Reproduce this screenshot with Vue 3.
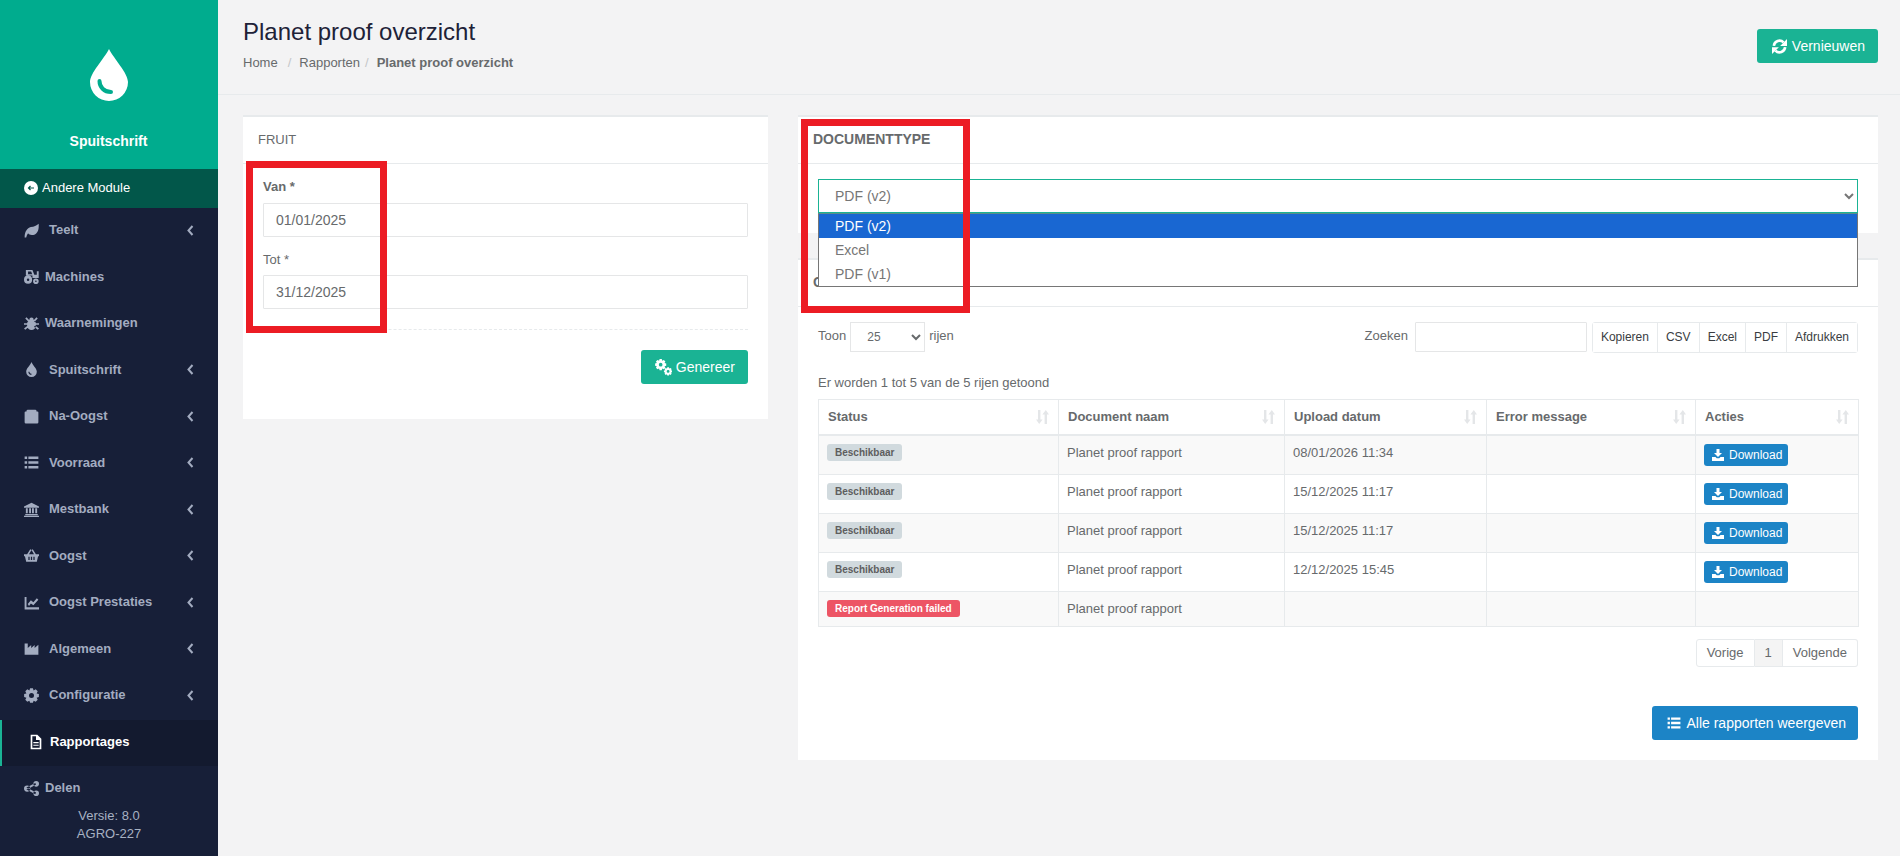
<script setup>
// teeth around a circle, with a hole in the middle
function gear(cx, cy, r, teeth, hole) {
  const pts = []
  const step = (Math.PI * 2) / teeth
  for (let i = 0; i < teeth; i++) {
    const a = i * step
    const corners = [
      [r * 0.74, a - step * 0.5],
      [r, a - step * 0.24],
      [r, a + step * 0.24],
      [r * 0.74, a + step * 0.5]
    ]
    corners.forEach(([rad, ang]) => {
      pts.push((cx + rad * Math.cos(ang)).toFixed(2) + ' ' + (cy + rad * Math.sin(ang)).toFixed(2))
    })
  }
  return (
    'M' + pts.join('L') + 'Z' +
    `M${cx - hole} ${cy}a${hole} ${hole} 0 1 0 ${hole * 2} 0a${hole} ${hole} 0 1 0 ${-hole * 2} 0Z`
  )
}

const icons = {
  leaf: 'M1 23C1 14 5 8 11 6.5C16 5.5 20 4.5 23.5 1C24 10 22.5 17 15 19C11 20 8 18.5 6.5 16.5C5 18.5 4 20.5 3.5 23Z',
  tractor:
    'M3 1.5h10.5l3 7.5H20.5V3.5H23.5v11h-10V10.5H3zM6.5 4V8.5h6.5L11.5 4zM0 17a6.5 6.5 0 1 0 13 0a6.5 6.5 0 1 0-13 0zM4.5 17a2 2 0 1 1 4 0a2 2 0 1 1-4 0zM14.5 19.5a4.5 4.5 0 1 0 9 0a4.5 4.5 0 1 0-9 0zM17.7 19.5a1.3 1.3 0 1 1 2.6 0a1.3 1.3 0 1 1-2.6 0z',
  bug: 'M8.5 6a3.5 3.5 0 0 1 7 0v2h-7zM6.5 8h11l1.5 3v5a7 6.5 0 0 1-14 0v-5zM2 4l2-2 5 5-2 2zM22 4l-2-2-5 5 2 2zM0 11.5h7v2.5H0zM17 11.5h7v2.5h-7zM2 22l-2-2 6-5 2 2zM22 22l2-2-6-5-2 2z',
  tint: 'M12 0C14 6 20.5 10 20.5 15.5A8.5 8.5 0 0 1 3.5 15.5C3.5 10 10 6 12 0ZM7 15.5a5 5 0 0 0 5 5v-1.7a3.3 3.3 0 0 1-3.3-3.3z',
  box: 'M6 1h12a2 2 0 0 1 2 2v1h1.5a1.5 1.5 0 0 1 1.5 1.5V21a2 2 0 0 1-2 2H3a2 2 0 0 1-2-2V5.5A1.5 1.5 0 0 1 2.5 4H4V3a2 2 0 0 1 2-2z',
  list: 'M1 2.5h4v4H1zM7 2.5h16v4H7zM1 10h4v4H1zM7 10h16v4H7zM1 17.5h4v4H1zM7 17.5h16v4H7z',
  bank: 'M12 1L24 7v2H0V7zM3 10h3v8H3zM8.2 10h3v8h-3zM12.8 10h3v8h-3zM18 10h3v8h-3zM2 19h20v2H2zM0 22h24v2H0z',
  basket:
    'M0 10h24v3h-1.5l-2 9H3.5l-2-9H0zM5 10L10 2l2 1-4 7zM19 10L14 2l-2 1 4 7zM7 14v5h2v-5zM11 14v5h2v-5zM15 14v5h2v-5z',
  chart: 'M1 3h3v16.5H24V23H1zM6 14.5l5-6 4 3 5.5-6.5L23 7.5l-8 9-4-3-3 4z',
  industry: 'M1 4h5v7l5.5-4.5V11L17 6.5V11L23 6v16H1z',
  cog: gear(12, 12, 12, 8, 4),
  file: 'M4 1h10l6 6v16H4zM6.5 3.5v17h11V9H12V3.5zM8 12h8v1.8H8zM8 16h8v1.8H8z',
  share:
    'M15 4.5a4.5 4.5 0 1 0 9 0a4.5 4.5 0 1 0-9 0zM15 19.5a4.5 4.5 0 1 0 9 0a4.5 4.5 0 1 0-9 0zM0 12a5 5 0 1 0 10 0a5 5 0 1 0-10 0zM4 10.5L18 3l1.3 2.5L6 13zM6 11L19.3 18.5 18 21 4 13.5z'
}
// these have overlapping parts and no holes
const solidIcons = ['bug', 'share']

const menu = [
  { label: 'Teelt', icon: 'leaf', sub: true },
  { label: 'Machines', icon: 'tractor', tight: true },
  { label: 'Waarnemingen', icon: 'bug', tight: true },
  { label: 'Spuitschrift', icon: 'tint', sub: true },
  { label: 'Na-Oogst', icon: 'box', sub: true },
  { label: 'Voorraad', icon: 'list', sub: true },
  { label: 'Mestbank', icon: 'bank', sub: true },
  { label: 'Oogst', icon: 'basket', sub: true },
  { label: 'Oogst Prestaties', icon: 'chart', sub: true },
  { label: 'Algemeen', icon: 'industry', sub: true },
  { label: 'Configuratie', icon: 'cog', sub: true },
  { label: 'Rapportages', icon: 'file', active: true },
  { label: 'Delen', icon: 'share', tight: true }
]

const genIcon = gear(8, 8, 8, 8, 2.6) + gear(18.5, 17.5, 6, 8, 2)
const listIcon = icons.list
const downloadIcon = 'M9 0h6v8h5l-8 8-8-8h5zM0 16h7l2.5 2.5h5L17 16h7v8H0z'

const columns = ['Status', 'Document naam', 'Upload datum', 'Error message', 'Acties']
const exportButtons = ['Kopieren', 'CSV', 'Excel', 'PDF', 'Afdrukken']

const rows = [
  { status: 'Beschikbaar', date: '08/01/2026 11:34', ok: true },
  { status: 'Beschikbaar', date: '15/12/2025 11:17', ok: true },
  { status: 'Beschikbaar', date: '15/12/2025 11:17', ok: true },
  { status: 'Beschikbaar', date: '12/12/2025 15:45', ok: true },
  { status: 'Report Generation failed', date: '', ok: false }
]
</script>

<template>
  <div class="page">
    <aside class="sidebar">
      <div class="logo">
        <svg class="logo-drop" viewBox="0 0 38 52">
          <path d="M19 0C24 10 38 24 38 33A19 19 0 0 1 0 33C0 24 14 10 19 0Z" fill="#fff" />
          <path d="M9.5 32C9.5 38 14 43 21 43" fill="none" stroke="#00ac8e" stroke-width="4" stroke-linecap="round" />
        </svg>
        <span class="logo-name">Spuitschrift</span>
      </div>
      <div class="other-module">
        <svg viewBox="0 0 14 14" width="14" height="14">
          <circle cx="7" cy="7" r="7" fill="#fff" />
          <path d="M10 7H4.5M6.5 5L4.5 7l2 2" fill="none" stroke="#02574a" stroke-width="1.2" />
        </svg>
        <span>Andere Module</span>
      </div>
      <nav>
        <a
          v-for="item in menu"
          :key="item.label"
          class="menu-item"
          :class="{ active: item.active, tight: item.tight }"
        >
          <svg class="menu-icon" viewBox="0 0 24 24">
            <path
              :d="icons[item.icon]"
              fill="currentColor"
              :fill-rule="solidIcons.includes(item.icon) ? 'nonzero' : 'evenodd'"
            />
          </svg>
          <span>{{ item.label }}</span>
          <svg v-if="item.sub" class="chevron" viewBox="0 0 7 11" width="7" height="11">
            <path d="M5.5 1L1.5 5.5l4 4.5" fill="none" stroke="currentColor" stroke-width="2" />
          </svg>
        </a>
      </nav>
      <div class="version">
        <div>Versie: 8.0</div>
        <div>AGRO-227</div>
      </div>
    </aside>

    <main class="main">
      <header class="heading">
        <div>
          <h2>Planet proof overzicht</h2>
          <div class="crumbs">
            <span>Home</span><i class="sep first">/</i><span>Rapporten</span><i class="sep">/</i><b>Planet proof overzicht</b>
          </div>
        </div>
        <button class="btn btn-green refresh">
          <svg viewBox="0 0 24 24" width="15" height="15">
            <path d="M3 11A9 9 0 0 1 18.5 5.5M21 13A9 9 0 0 1 5.5 18.5" fill="none" stroke="currentColor" stroke-width="4.2" />
            <path d="M24 0V11H13ZM0 24V13H11Z" fill="currentColor" />
          </svg>
          Vernieuwen
        </button>
      </header>

      <div class="content">
        <section class="col-left">
          <div class="card">
            <div class="card-title fruit">FRUIT</div>
            <div class="form-body">
              <label class="lbl-van">Van *</label>
              <input class="field" value="01/01/2025" readonly />
              <label class="lbl-tot">Tot *</label>
              <input class="field" value="31/12/2025" readonly />
              <div class="dashed"></div>
              <div class="form-actions">
                <button class="btn btn-green generate">
                  <svg viewBox="0 0 24 24" width="17" height="17">
                    <path :d="genIcon" fill="currentColor" fill-rule="evenodd" />
                  </svg>
                  Genereer
                </button>
              </div>
            </div>
          </div>
        </section>

        <section class="col-right">
          <div class="card doc-card">
            <div class="card-title">DOCUMENTTYPE</div>
            <div class="doc-body">
              <div class="select-wrap">
                <select class="doc-select">
                  <option>PDF (v2)</option>
                  <option>Excel</option>
                  <option>PDF (v1)</option>
                </select>
                <div class="dropdown">
                  <div class="opt selected">PDF (v2)</div>
                  <div class="opt">Excel</div>
                  <div class="opt">PDF (v1)</div>
                </div>
              </div>
            </div>
          </div>

          <div class="card table-card">
            <div class="card-title">OVERZICHT</div>
            <div class="table-body">
              <div class="table-tools">
                <div class="tool-left">
                  <span>Toon</span>
                  <select class="len-select">
                    <option>25</option>
                    <option>50</option>
                  </select>
                  <span>rijen</span>
                </div>
                <div class="tool-right">
                  <span>Zoeken</span>
                  <input class="search" />
                  <div class="export-group">
                    <button v-for="b in exportButtons" :key="b">{{ b }}</button>
                  </div>
                </div>
              </div>
              <div class="info">Er worden 1 tot 5 van de 5 rijen getoond</div>
              <table>
                <colgroup>
                  <col style="width: 240px" />
                  <col style="width: 226px" />
                  <col style="width: 202px" />
                  <col style="width: 209px" />
                  <col style="width: 163px" />
                </colgroup>
                <thead>
                  <tr>
                    <th v-for="c in columns" :key="c">
                      <div class="th-inner">
                        <span>{{ c }}</span>
                        <svg viewBox="0 0 13 14" width="13" height="14">
                          <path d="M2 0h2.4v9.5H6.6L3.2 14 0 9.5h2zM8.6 4.5H6.4L9.8 0l3.2 4.5h-2V14H8.6z" fill="#e4e6e8" />
                        </svg>
                      </div>
                    </th>
                  </tr>
                </thead>
                <tbody>
                  <tr v-for="(row, i) in rows" :key="i" :class="{ odd: i % 2 === 0, last: !row.ok }">
                    <td>
                      <span class="badge" :class="{ danger: !row.ok }">{{ row.status }}</span>
                    </td>
                    <td>Planet proof rapport</td>
                    <td>{{ row.date }}</td>
                    <td></td>
                    <td>
                      <button v-if="row.ok" class="btn-download">
                        <svg viewBox="0 0 24 24" width="12" height="12">
                          <path :d="downloadIcon" fill="currentColor" />
                        </svg>
                        Download
                      </button>
                    </td>
                  </tr>
                </tbody>
              </table>
              <div class="pager">
                <span class="prev">Vorige</span>
                <span class="current">1</span>
                <span class="next">Volgende</span>
              </div>
              <div class="all-row">
                <button class="btn btn-blue">
                  <svg viewBox="0 0 24 24" width="14" height="14">
                    <path :d="listIcon" fill="currentColor" />
                  </svg>
                  Alle rapporten weergeven
                </button>
              </div>
            </div>
          </div>
        </section>
      </div>
    </main>

    <!-- rode kaders over de schermafbeelding -->
    <div class="mark mark-form"></div>
    <div class="mark mark-doc"></div>
  </div>
</template>

<style>
html,
body {
  margin: 0;
  background: #f3f3f4;
}
</style>

<style scoped>
.page {
  position: relative;
  display: flex;
  height: 856px;
  overflow: hidden;
  font-family: "Liberation Sans", Arial, sans-serif;
  font-size: 13px;
  line-height: 18px;
  color: #676a6c;
  background: #f3f3f4;
}

/* sidebar */
.sidebar {
  width: 218px;
  flex: none;
  background: #171f38;
}

.logo {
  height: 169px;
  box-sizing: border-box;
  padding-top: 49px;
  padding-right: 1px;
  background: #00ac8e;
  display: flex;
  flex-direction: column;
  align-items: center;
}

.logo-drop {
  width: 38px;
  height: 52px;
}

.logo-name {
  margin-top: 31px;
  color: #fff;
  font-size: 14px;
  font-weight: 700;
  line-height: 18px;
}

.other-module {
  height: 39px;
  box-sizing: border-box;
  padding: 0 0 2px 24px;
  display: flex;
  align-items: center;
  gap: 4px;
  background: #02574a;
  color: #fff;
}

.menu-item {
  height: 46.5px;
  box-sizing: border-box;
  padding: 0 24px 2px 24px;
  display: flex;
  align-items: center;
  gap: 10px;
  color: #a3acc0;
  font-weight: 700;
}

.menu-item.tight {
  gap: 6px;
}

.menu-item.active {
  padding-left: 28px;
  gap: 6px;
  background: #131a2f;
  color: #fff;
  box-shadow: inset 2px 0 0 #1ab394;
}

.menu-icon {
  width: 15px;
  height: 15px;
  flex: none;
}

.menu-item.active .menu-icon {
  width: 16px;
  height: 16px;
}

.chevron {
  margin-left: auto;
}

.version {
  margin-top: -6px;
  text-align: center;
  color: #a7b1c2;
}

/* main */
.main {
  flex: 1;
  min-width: 0;
}

.heading {
  height: 95px;
  box-sizing: border-box;
  padding: 18px 22px 0 25px;
  border-bottom: 1px solid #e7eaec;
  display: flex;
  justify-content: space-between;
  align-items: flex-start;
}

h2 {
  margin: 0;
  font-size: 24px;
  line-height: 28px;
  font-weight: 400;
  color: #1e2238;
}

.crumbs {
  margin-top: 8px;
  display: flex;
  align-items: center;
}

.crumbs b {
  font-weight: 700;
}

.sep {
  font-style: normal;
  color: #c4c6c8;
  margin: 0 8px 0 5px;
}

.sep.first {
  margin: 0 8px 0 10px;
}

.btn {
  height: 34px;
  box-sizing: border-box;
  display: inline-flex;
  align-items: center;
  border: 0;
  border-radius: 3px;
  color: #fff;
  font: inherit;
  font-size: 14px;
}

.btn-green {
  background: #1ab394;
}

.btn-blue {
  background: #1c84c6;
  padding: 0 12px 0 15px;
  gap: 5px;
}

.refresh {
  margin-top: 11px;
  padding: 0 13px 0 15px;
  gap: 5px;
}

.generate {
  padding: 0 13px 0 14px;
  gap: 4px;
}

.content {
  padding: 20px 22px 0 25px;
  display: grid;
  grid-template-columns: 525px 1080px;
  gap: 30px;
  align-items: start;
}

.card {
  background: #fff;
  border-top: 2px solid #e7eaec;
}

.card-title {
  height: 47px;
  box-sizing: border-box;
  padding: 0 15px 2px;
  display: flex;
  align-items: center;
  border-bottom: 1px solid #e7eaec;
  font-size: 14px;
  font-weight: 700;
}

.card-title.fruit {
  padding-bottom: 0;
  font-size: 13px;
  font-weight: 400;
}

.form-body {
  padding: 14px 20px 35px;
}

label {
  display: block;
}

.lbl-van {
  font-weight: 700;
  margin-bottom: 7px;
}

.lbl-tot {
  margin: 14px 0 6px;
}

.field,
.search {
  display: block;
  width: 100%;
  box-sizing: border-box;
  height: 34px;
  padding: 6px 12px;
  border: 1px solid #e5e6e7;
  border-radius: 1px;
  background: #fff;
  color: #676a6c;
  font: inherit;
  font-size: 14px;
  outline: none;
}

.dashed {
  margin-top: 20px;
  border-top: 1px dashed #e7eaec;
}

.form-actions {
  margin-top: 20px;
  display: flex;
  justify-content: flex-end;
}

/* document type */
.doc-card {
  height: 118px;
  box-sizing: border-box;
}

.doc-body {
  padding: 15px 20px;
}

.select-wrap {
  position: relative;
  z-index: 2;
}

.doc-select {
  display: block;
  width: 100%;
  height: 34px;
  box-sizing: border-box;
  padding: 6px 12px;
  border: 1px solid #1ab394;
  border-radius: 0;
  background: #fff;
  color: #767676;
  font-family: inherit;
  font-size: 14px;
  outline: none;
}

.dropdown {
  position: absolute;
  top: 100%;
  left: 0;
  right: 0;
  box-sizing: border-box;
  height: 74px;
  background: #fff;
  border: 1px solid #767676;
  border-top: 1px solid #5a8f88;
  color: #767676;
  font-size: 14px;
}

.opt {
  height: 24px;
  padding-left: 16px;
  line-height: 24px;
}

.opt.selected {
  background: #1967d2;
  color: #fff;
}

/* table */
.table-card {
  margin-top: 25px;
}

.table-body {
  padding: 15px 20px 20px;
}

.table-tools {
  display: flex;
  justify-content: space-between;
  height: 31px;
}

.tool-left,
.tool-right {
  display: flex;
  align-items: flex-start;
}

.tool-left span,
.tool-right > span {
  line-height: 27px;
}

.len-select {
  width: 75px;
  height: 30px;
  box-sizing: border-box;
  margin: 0 4px 0 4px;
  padding: 0 12px;
  border: 1px solid #e5e6e7;
  border-radius: 0;
  background: #fff;
  color: #676a6c;
  font-family: inherit;
  font-size: 12px;
  outline: none;
}

.search {
  width: 172px;
  height: 30px;
  margin: 0 5px 0 7px;
}

.export-group {
  display: flex;
  height: 31px;
  box-sizing: border-box;
  border: 1px solid #e7eaec;
  border-radius: 3px;
}

.export-group button {
  padding: 0 8px 1px;
  border: 0;
  border-left: 1px solid #e7eaec;
  background: #fff;
  color: #3a3d42;
  font: inherit;
  font-size: 12px;
}

.export-group button:first-child {
  border-left: 0;
}

.info {
  margin-top: 21px;
  margin-bottom: 7px;
}

table {
  width: 1040px;
  table-layout: fixed;
  border-collapse: collapse;
}

th,
td {
  border: 1px solid #e7eaec;
  padding: 8px 9px 8px 8px;
  text-align: left;
  vertical-align: top;
  height: 38px;
  box-sizing: border-box;
  font-weight: 400;
}

th {
  height: 33px;
  padding-left: 9px;
  font-weight: 700;
  border-bottom-width: 2px;
}

tr.odd td {
  background: #f9f9f9;
}

tr.last td {
  height: 34px;
}

.th-inner {
  display: flex;
  justify-content: space-between;
  align-items: center;
}

.badge {
  display: inline-block;
  padding: 0 8px;
  height: 17px;
  line-height: 17px;
  border-radius: 3px;
  background: #d1dade;
  color: #5e5e5e;
  font-size: 10px;
  font-weight: 700;
  vertical-align: top;
}

.badge.danger {
  background: #ed5565;
  color: #fff;
}

.btn-download {
  display: flex;
  align-items: center;
  gap: 5px;
  height: 22px;
  padding: 0 6px 0 8px;
  border: 0;
  border-radius: 3px;
  background: #1c84c6;
  color: #fff;
  font: inherit;
  font-size: 12px;
}

.pager {
  margin-top: 12px;
  display: flex;
  justify-content: flex-end;
  line-height: 26px;
}

.pager span {
  border: 1px solid #e7eaec;
  padding: 0 10px;
  background: #fff;
}

.pager .prev {
  border-radius: 3px 0 0 3px;
}

.pager .current {
  border-left: 0;
  background: #f4f4f4;
}

.pager .next {
  border-left: 0;
  border-radius: 0 3px 3px 0;
}

.all-row {
  margin-top: 39px;
  display: flex;
  justify-content: flex-end;
}

/* annotations */
.mark {
  position: absolute;
  box-sizing: border-box;
  border: 7px solid #ec1c24;
  z-index: 5;
}

.mark-form {
  left: 246px;
  top: 161px;
  width: 141px;
  height: 172px;
}

.mark-doc {
  left: 801px;
  top: 119px;
  width: 169px;
  height: 194px;
}
</style>
